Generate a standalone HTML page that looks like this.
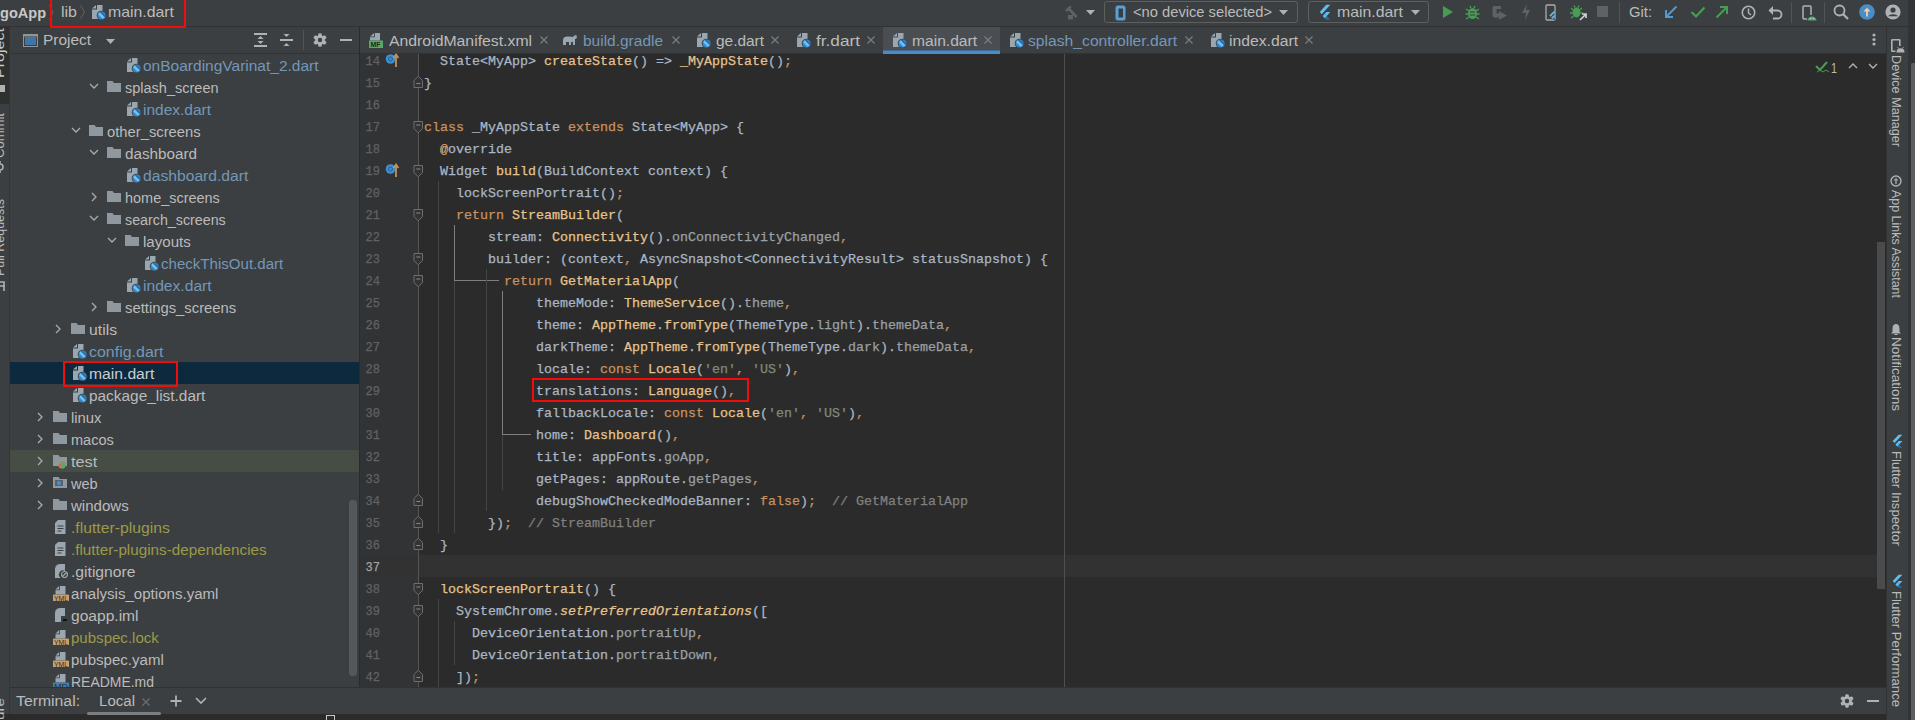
<!DOCTYPE html>
<html><head><meta charset="utf-8"><style>
html,body{margin:0;padding:0;width:1915px;height:720px;overflow:hidden;background:#3c3f41;}
body>div,body>svg{position:absolute;}
.t{font-family:"Liberation Sans",sans-serif;white-space:pre;transform-origin:0 50%;}
.m{font-family:"Liberation Mono",monospace;font-size:13.333px;line-height:22px;white-space:pre;-webkit-text-stroke:0.25px currentColor;}
</style></head><body>
<div style="left:0px;top:0px;width:1915px;height:26px;background:#3c3f41;"></div>
<div style="left:0px;top:26px;width:1915px;height:1px;background:#2f3133;"></div>
<div style="left:0px;top:27px;width:10px;height:693px;background:#3c3f41;"></div>
<div style="left:0px;top:27px;width:9px;height:77px;background:#2f3030;"></div>
<div style="left:9px;top:27px;width:1px;height:693px;background:#333536;"></div>
<div style="left:11px;top:27px;width:348px;height:661px;background:#3c3f41;"></div>
<div style="left:11px;top:53px;width:348px;height:1px;background:#323232;"></div>
<div style="left:359px;top:27px;width:1px;height:661px;background:#2b2b2b;"></div>
<div style="left:360px;top:27px;width:1526px;height:26px;background:#3c3f41;"></div>
<div style="left:360px;top:53px;width:1526px;height:1px;background:#323232;"></div>
<div style="left:360px;top:54px;width:58px;height:634px;background:#313335;"></div>
<div style="left:418px;top:54px;width:1468px;height:634px;background:#2b2b2b;"></div>
<div style="left:1886px;top:27px;width:29px;height:693px;background:#3c3f41;"></div>
<div style="left:1886px;top:27px;width:1px;height:693px;background:#323232;"></div>
<div class="t" style="left:0px;top:3.37px;font-size:14px;line-height:20px;color:#c8c8c8;transform:scaleX(1.0384);font-weight:700;">goApp</div>
<svg style="left:49px;top:5px;" width="5" height="15" viewBox="0 0 5 15"><path d="M0.5 0.5L4 7.5L0.5 14.5" fill="none" stroke="#5f6365" stroke-width="1"/></svg>
<div class="t" style="left:61px;top:2.04px;font-size:15px;line-height:20px;color:#bbbbbb;transform:scaleX(1.0667);">lib</div>
<svg style="left:80px;top:5px;" width="6" height="14" viewBox="0 0 6 14"><path d="M0.5 0.5L4.5 7L0.5 13.5" fill="none" stroke="#5f6365" stroke-width="1"/></svg>
<svg style="left:92px;top:5px;" width="15" height="15" viewBox="0 0 15 15"><path d="M5 0H10.5V14H0V4.5H5z" fill="#9aa7b0"/><path d="M0 3.5L4 0V3.5z" fill="#9aa7b0"/><circle cx="9.5" cy="10.5" r="4.8" fill="#3c3f41"/><circle cx="9.5" cy="10.5" r="4" fill="#3a86c8"/><path d="M6.2 9.3L7.8 7.3L12.6 12.3L10.6 13.8z" fill="#6ec4f5"/><path d="M7.8 7.3H10.2L13.3 10.4V12.3z" fill="#2a6aa8"/></svg>
<div class="t" style="left:108px;top:2.04px;font-size:15px;line-height:20px;color:#bbbbbb;transform:scaleX(1.0552);">main.dart</div>
<div style="left:50px;top:-2px;width:136px;height:30px;border:2px solid #f20d0d;box-sizing:border-box;"></div>
<svg style="left:1064px;top:5px;" width="14" height="15" viewBox="0 0 14 15"><path d="M1 5L5.5 1L8 1.5L6.5 3.5L13.5 11L11.5 13L4.5 5.5L3 7z" fill="#5f6264"/><rect x="4" y="10" width="5" height="4.5" fill="#5f6264"/></svg>
<svg style="left:1086px;top:10px;" width="9" height="5" viewBox="0 0 9 5"><path d="M0 0H9L4.5 5z" fill="#afb1b3"/></svg>
<div style="left:1104px;top:1px;width:194px;height:22px;border:1px solid #5e6060;box-sizing:border-box;border-radius:3px;"></div>
<svg style="left:1115px;top:5px;" width="11" height="16" viewBox="0 0 11 16"><rect x="0.5" y="0.5" width="10" height="15" rx="2.5" fill="#5a9fd6"/><rect x="3.5" y="3.5" width="4.5" height="9" fill="#3a3c3e"/></svg>
<div class="t" style="left:1133px;top:2.04px;font-size:15px;line-height:20px;color:#bbbbbb;transform:scaleX(0.9803);">&lt;no device selected&gt;</div>
<svg style="left:1279px;top:10px;" width="9" height="5" viewBox="0 0 9 5"><path d="M0 0H9L4.5 5z" fill="#afb1b3"/></svg>
<div style="left:1308px;top:1px;width:121px;height:22px;border:1px solid #5e6060;box-sizing:border-box;border-radius:3px;"></div>
<svg style="left:1319px;top:4px;" width="12" height="16" viewBox="0 0 12 16"><svg width="12" height="16" viewBox="0 0 166 202" preserveAspectRatio="none"><path d="M37.7 128.9L9.8 101L100.7 10.1H156.5z" fill="#62bdf0"/><path d="M156.4 102.4H100.7L79.8 123.3L107.7 151.2z" fill="#62bdf0"/><path d="M79.8 179.1L100.7 200H156.4L107.7 151.2z" fill="#2a6aa3"/><path d="M79.8 123.3L107.7 151.2L79.8 179.1L51.9 151.2z" fill="#62bdf0"/></svg></svg>
<div class="t" style="left:1337px;top:2.04px;font-size:15px;line-height:20px;color:#bbbbbb;transform:scaleX(1.0552);">main.dart</div>
<svg style="left:1411px;top:10px;" width="9" height="5" viewBox="0 0 9 5"><path d="M0 0H9L4.5 5z" fill="#afb1b3"/></svg>
<svg style="left:1442px;top:5px;" width="12" height="14" viewBox="0 0 12 14"><path d="M1 1L11 7L1 13z" fill="#499c54"/></svg>
<svg style="left:1465px;top:4px;" width="15" height="16" viewBox="0 0 15 16"><ellipse cx="7.5" cy="9.5" rx="4.5" ry="5.5" fill="#499c54"/><path d="M1 5L4 7M14 5L11 7M0.5 10H3M14.5 10H12M1 15L4 13M14 15L11 13M5 2L6 4M10 2L9 4" stroke="#499c54" stroke-width="1.4"/><path d="M5 8H10M5 11H10" stroke="#3c3f41" stroke-width="1"/></svg>
<svg style="left:1491px;top:5px;" width="17" height="15" viewBox="0 0 17 15"><path d="M1.5 2.5Q1.5 1 3 1H10V4H5.5V8.5H9.5V9.5L7 12.5H3.5Q1.5 12.5 1.5 10.5z" fill="#5f6264"/><path d="M8 6L16 10.5L8 15z" fill="#5f6264"/></svg>
<svg style="left:1522px;top:4px;" width="8" height="16" viewBox="0 0 8 16"><path d="M5 0L0 9H4L3 16L8 6H4z" fill="#5f6264"/></svg>
<svg style="left:1545px;top:4px;" width="14" height="17" viewBox="0 0 14 17"><rect x="1" y="1" width="9" height="15" rx="1" fill="none" stroke="#a9abad" stroke-width="1.3"/></svg>
<svg style="left:1549px;top:11px;" width="7" height="9" viewBox="0 0 7 9"><svg width="7" height="9" viewBox="0 0 166 202" preserveAspectRatio="none"><path d="M37.7 128.9L9.8 101L100.7 10.1H156.5z" fill="#62bdf0"/><path d="M156.4 102.4H100.7L79.8 123.3L107.7 151.2z" fill="#62bdf0"/><path d="M79.8 179.1L100.7 200H156.4L107.7 151.2z" fill="#2a6aa3"/><path d="M79.8 123.3L107.7 151.2L79.8 179.1L51.9 151.2z" fill="#62bdf0"/></svg></svg>
<svg style="left:1570px;top:4px;" width="18" height="17" viewBox="0 0 18 17"><ellipse cx="6.5" cy="8.5" rx="4" ry="5" fill="#499c54"/><path d="M1 4L3.5 6M12 4L9.5 6M0 9H2.5M13 9H10.5M1 14L3.5 12M4 1.5L5 3.5M9 1.5L8 3.5" stroke="#499c54" stroke-width="1.4"/><path d="M10 16L16 10M12 10H16V14" fill="none" stroke="#d0d0d0" stroke-width="1.7"/></svg>
<div style="left:1597px;top:6px;width:11px;height:11px;background:#5f6264;"></div>
<div style="left:1619px;top:2px;width:1px;height:21px;background:#515456;"></div>
<div class="t" style="left:1629px;top:2.04px;font-size:15px;line-height:20px;color:#bbbbbb;transform:scaleX(0.9853);">Git:</div>
<svg style="left:1664px;top:5px;" width="14" height="14" viewBox="0 0 14 14"><path d="M12.5 1.5L2.5 11.5M2 5V12H9" fill="none" stroke="#4d9bd6" stroke-width="2"/></svg>
<svg style="left:1690px;top:5px;" width="16" height="14" viewBox="0 0 16 14"><path d="M1.5 7L6 11.5L14.5 2.5" fill="none" stroke="#499c54" stroke-width="2.2"/></svg>
<svg style="left:1715px;top:5px;" width="14" height="14" viewBox="0 0 14 14"><path d="M1.5 12.5L11.5 2.5M5 2H12V9" fill="none" stroke="#499c54" stroke-width="2"/></svg>
<svg style="left:1741px;top:5px;" width="15" height="15" viewBox="0 0 15 15"><circle cx="7.5" cy="7.5" r="6.2" fill="none" stroke="#afb1b3" stroke-width="1.6"/><path d="M7.5 3.5V8L10 10" fill="none" stroke="#afb1b3" stroke-width="1.5"/></svg>
<svg style="left:1768px;top:4px;" width="15" height="16" viewBox="0 0 15 16"><path d="M4 6.5H9.5A4 4 0 0 1 9.5 14.5H5" fill="none" stroke="#afb1b3" stroke-width="1.8"/><path d="M0.5 6.5L5 2V11z" fill="#afb1b3"/></svg>
<div style="left:1791px;top:2px;width:1px;height:21px;background:#515456;"></div>
<svg style="left:1802px;top:5px;" width="15" height="16" viewBox="0 0 15 16"><rect x="1" y="1" width="8" height="13" rx="1" fill="none" stroke="#afb1b3" stroke-width="1.5"/><rect x="5" y="10" width="10" height="6" fill="#3c3f41"/><path d="M5.5 15.5A4.5 4 0 0 1 14.5 15.5z" fill="#59a869"/><circle cx="8.5" cy="13.5" r="0.8" fill="#9fd4f0"/><circle cx="11.5" cy="13.5" r="0.8" fill="#9fd4f0"/></svg>
<div style="left:1824px;top:2px;width:1px;height:21px;background:#515456;"></div>
<svg style="left:1833px;top:4px;" width="16" height="16" viewBox="0 0 16 16"><circle cx="6.5" cy="6.5" r="5" fill="none" stroke="#afb1b3" stroke-width="1.8"/><path d="M10 10L15 15" stroke="#afb1b3" stroke-width="2.2"/></svg>
<svg style="left:1859px;top:4px;" width="16" height="16" viewBox="0 0 16 16"><circle cx="8" cy="8" r="7.8" fill="#4a8cc6"/><path d="M8 12.5V6" stroke="#e8d3a8" stroke-width="1.8"/><path d="M4.5 7.5L8 3.8L11.5 7.5z" fill="#e8d3a8"/></svg>
<svg style="left:1885px;top:4px;" width="16" height="16" viewBox="0 0 16 16"><circle cx="8" cy="8" r="7.6" fill="#afb1b3"/><circle cx="8" cy="6" r="2.6" fill="#3c3f41"/><path d="M2.8 12.3A6.5 5 0 0 1 13.2 12.3z" fill="#3c3f41"/></svg>
<div style="left:1908px;top:0px;width:7px;height:26px;background:#323435;"></div>
<svg style="left:23px;top:34px;" width="15" height="13" viewBox="0 0 15 13"><rect x="0.5" y="0.5" width="14" height="12" fill="none" stroke="#8f9599" stroke-width="1"/><rect x="0.5" y="0.5" width="14" height="2" fill="#8f9599"/><rect x="2" y="3" width="11" height="8" fill="#3e76a6"/></svg>
<div class="t" style="left:43px;top:30.37px;font-size:14px;line-height:20px;color:#bbbbbb;transform:scaleX(1.1019);">Project</div>
<svg style="left:106px;top:39px;" width="9" height="5" viewBox="0 0 9 5"><path d="M0 0H9L4.5 5z" fill="#afb1b3"/></svg>
<svg style="left:254px;top:32px;" width="14" height="16" viewBox="0 0 14 16"><rect x="0" y="1" width="13" height="2" fill="#afb1b3"/><rect x="0" y="13" width="13" height="2" fill="#afb1b3"/><path d="M3.5 7L6.5 4L9.5 7z" fill="#afb1b3"/><path d="M3.5 9L6.5 12L9.5 9z" fill="#afb1b3"/></svg>
<svg style="left:280px;top:33px;" width="14" height="14" viewBox="0 0 14 14"><rect x="0" y="6" width="13" height="2" fill="#afb1b3"/><path d="M3.5 1H9.5L6.5 4z" fill="#afb1b3"/><path d="M3.5 13H9.5L6.5 10z" fill="#afb1b3"/></svg>
<div style="left:303px;top:30px;width:1px;height:20px;background:#515456;"></div>
<svg style="left:313px;top:33px;" width="14" height="14" viewBox="0 0 14 14"><circle cx="7.0" cy="7.0" r="4.20" fill="#afb1b3"/><path d="M5.50 4.23L6.32 1.14L7.68 1.14L8.50 4.23L8.65 4.31L11.74 3.48L12.41 4.66L10.15 6.92L10.15 7.08L12.41 9.34L11.74 10.52L8.65 9.69L8.50 9.77L7.68 12.86L6.32 12.86L5.50 9.77L5.35 9.69L2.26 10.52L1.59 9.34L3.85 7.08L3.85 6.92L1.59 4.66L2.26 3.48L5.35 4.31z" fill="#afb1b3" stroke="#afb1b3" stroke-width="2" stroke-linejoin="round"/><circle cx="7.0" cy="7.0" r="2.2" fill="#3c3f41"/></svg>
<div style="left:340px;top:39px;width:12px;height:2px;background:#afb1b3;"></div>
<div style="left:10px;top:362px;width:349px;height:22px;background:#0d293e;"></div>
<div style="left:10px;top:450px;width:349px;height:22px;background:#454d45;"></div>
<svg style="left:127px;top:58px;" width="15" height="15" viewBox="0 0 15 15"><path d="M5 0H10.5V14H0V4.5H5z" fill="#9aa7b0"/><path d="M0 3.5L4 0V3.5z" fill="#9aa7b0"/><circle cx="9.5" cy="10.5" r="4.8" fill="#3c3f41"/><circle cx="9.5" cy="10.5" r="4" fill="#3a86c8"/><path d="M6.2 9.3L7.8 7.3L12.6 12.3L10.6 13.8z" fill="#6ec4f5"/><path d="M7.8 7.3H10.2L13.3 10.4V12.3z" fill="#2a6aa8"/></svg>
<div class="t" style="left:143px;top:56.37px;font-size:14px;line-height:20px;color:#7497b8;transform:scaleX(1.1076);">onBoardingVarinat_2.dart</div>
<svg style="left:107px;top:81px;" width="14" height="12" viewBox="0 0 14 12"><path d="M0 0H5.5L7 2H14V11H0z" fill="#8e989e"/></svg>
<svg style="left:89px;top:83px;" width="10" height="6" viewBox="0 0 10 6"><path d="M1 1L5 5L9 1" fill="none" stroke="#a3adb3" stroke-width="1.3"/></svg>
<div class="t" style="left:125px;top:78.37px;font-size:14px;line-height:20px;color:#bbbbbb;transform:scaleX(1.0362);">splash_screen</div>
<svg style="left:127px;top:102px;" width="15" height="15" viewBox="0 0 15 15"><path d="M5 0H10.5V14H0V4.5H5z" fill="#9aa7b0"/><path d="M0 3.5L4 0V3.5z" fill="#9aa7b0"/><circle cx="9.5" cy="10.5" r="4.8" fill="#3c3f41"/><circle cx="9.5" cy="10.5" r="4" fill="#3a86c8"/><path d="M6.2 9.3L7.8 7.3L12.6 12.3L10.6 13.8z" fill="#6ec4f5"/><path d="M7.8 7.3H10.2L13.3 10.4V12.3z" fill="#2a6aa8"/></svg>
<div class="t" style="left:143px;top:100.37px;font-size:14px;line-height:20px;color:#7497b8;transform:scaleX(1.1065);">index.dart</div>
<svg style="left:89px;top:125px;" width="14" height="12" viewBox="0 0 14 12"><path d="M0 0H5.5L7 2H14V11H0z" fill="#8e989e"/></svg>
<svg style="left:71px;top:127px;" width="10" height="6" viewBox="0 0 10 6"><path d="M1 1L5 5L9 1" fill="none" stroke="#a3adb3" stroke-width="1.3"/></svg>
<div class="t" style="left:107px;top:122.37px;font-size:14px;line-height:20px;color:#bbbbbb;transform:scaleX(1.0556);">other_screens</div>
<svg style="left:107px;top:147px;" width="14" height="12" viewBox="0 0 14 12"><path d="M0 0H5.5L7 2H14V11H0z" fill="#8e989e"/></svg>
<svg style="left:89px;top:149px;" width="10" height="6" viewBox="0 0 10 6"><path d="M1 1L5 5L9 1" fill="none" stroke="#a3adb3" stroke-width="1.3"/></svg>
<div class="t" style="left:125px;top:144.37px;font-size:14px;line-height:20px;color:#bbbbbb;transform:scaleX(1.0888);">dashboard</div>
<svg style="left:127px;top:168px;" width="15" height="15" viewBox="0 0 15 15"><path d="M5 0H10.5V14H0V4.5H5z" fill="#9aa7b0"/><path d="M0 3.5L4 0V3.5z" fill="#9aa7b0"/><circle cx="9.5" cy="10.5" r="4.8" fill="#3c3f41"/><circle cx="9.5" cy="10.5" r="4" fill="#3a86c8"/><path d="M6.2 9.3L7.8 7.3L12.6 12.3L10.6 13.8z" fill="#6ec4f5"/><path d="M7.8 7.3H10.2L13.3 10.4V12.3z" fill="#2a6aa8"/></svg>
<div class="t" style="left:143px;top:166.37px;font-size:14px;line-height:20px;color:#7497b8;transform:scaleX(1.1187);">dashboard.dart</div>
<svg style="left:107px;top:191px;" width="14" height="12" viewBox="0 0 14 12"><path d="M0 0H5.5L7 2H14V11H0z" fill="#8e989e"/></svg>
<svg style="left:91px;top:192px;" width="6" height="10" viewBox="0 0 6 10"><path d="M1 1L5 5L1 9" fill="none" stroke="#a3adb3" stroke-width="1.3"/></svg>
<div class="t" style="left:125px;top:188.37px;font-size:14px;line-height:20px;color:#bbbbbb;transform:scaleX(1.0329);">home_screens</div>
<svg style="left:107px;top:213px;" width="14" height="12" viewBox="0 0 14 12"><path d="M0 0H5.5L7 2H14V11H0z" fill="#8e989e"/></svg>
<svg style="left:89px;top:215px;" width="10" height="6" viewBox="0 0 10 6"><path d="M1 1L5 5L9 1" fill="none" stroke="#a3adb3" stroke-width="1.3"/></svg>
<div class="t" style="left:125px;top:210.37px;font-size:14px;line-height:20px;color:#bbbbbb;transform:scaleX(1.0194);">search_screens</div>
<svg style="left:125px;top:235px;" width="14" height="12" viewBox="0 0 14 12"><path d="M0 0H5.5L7 2H14V11H0z" fill="#8e989e"/></svg>
<svg style="left:107px;top:237px;" width="10" height="6" viewBox="0 0 10 6"><path d="M1 1L5 5L9 1" fill="none" stroke="#a3adb3" stroke-width="1.3"/></svg>
<div class="t" style="left:143px;top:232.37px;font-size:14px;line-height:20px;color:#bbbbbb;transform:scaleX(1.0779);">layouts</div>
<svg style="left:145px;top:256px;" width="15" height="15" viewBox="0 0 15 15"><path d="M5 0H10.5V14H0V4.5H5z" fill="#9aa7b0"/><path d="M0 3.5L4 0V3.5z" fill="#9aa7b0"/><circle cx="9.5" cy="10.5" r="4.8" fill="#3c3f41"/><circle cx="9.5" cy="10.5" r="4" fill="#3a86c8"/><path d="M6.2 9.3L7.8 7.3L12.6 12.3L10.6 13.8z" fill="#6ec4f5"/><path d="M7.8 7.3H10.2L13.3 10.4V12.3z" fill="#2a6aa8"/></svg>
<div class="t" style="left:161px;top:254.37px;font-size:14px;line-height:20px;color:#7497b8;transform:scaleX(1.0761);">checkThisOut.dart</div>
<svg style="left:127px;top:278px;" width="15" height="15" viewBox="0 0 15 15"><path d="M5 0H10.5V14H0V4.5H5z" fill="#9aa7b0"/><path d="M0 3.5L4 0V3.5z" fill="#9aa7b0"/><circle cx="9.5" cy="10.5" r="4.8" fill="#3c3f41"/><circle cx="9.5" cy="10.5" r="4" fill="#3a86c8"/><path d="M6.2 9.3L7.8 7.3L12.6 12.3L10.6 13.8z" fill="#6ec4f5"/><path d="M7.8 7.3H10.2L13.3 10.4V12.3z" fill="#2a6aa8"/></svg>
<div class="t" style="left:143px;top:276.37px;font-size:14px;line-height:20px;color:#7497b8;transform:scaleX(1.1163);">index.dart</div>
<svg style="left:107px;top:301px;" width="14" height="12" viewBox="0 0 14 12"><path d="M0 0H5.5L7 2H14V11H0z" fill="#8e989e"/></svg>
<svg style="left:91px;top:302px;" width="6" height="10" viewBox="0 0 6 10"><path d="M1 1L5 5L1 9" fill="none" stroke="#a3adb3" stroke-width="1.3"/></svg>
<div class="t" style="left:125px;top:298.37px;font-size:14px;line-height:20px;color:#bbbbbb;transform:scaleX(1.0589);">settings_screens</div>
<svg style="left:71px;top:323px;" width="14" height="12" viewBox="0 0 14 12"><path d="M0 0H5.5L7 2H14V11H0z" fill="#8e989e"/></svg>
<svg style="left:55px;top:324px;" width="6" height="10" viewBox="0 0 6 10"><path d="M1 1L5 5L1 9" fill="none" stroke="#a3adb3" stroke-width="1.3"/></svg>
<div class="t" style="left:89px;top:320.37px;font-size:14px;line-height:20px;color:#bbbbbb;transform:scaleX(1.1249);">utils</div>
<svg style="left:73px;top:344px;" width="15" height="15" viewBox="0 0 15 15"><path d="M5 0H10.5V14H0V4.5H5z" fill="#9aa7b0"/><path d="M0 3.5L4 0V3.5z" fill="#9aa7b0"/><circle cx="9.5" cy="10.5" r="4.8" fill="#3c3f41"/><circle cx="9.5" cy="10.5" r="4" fill="#3a86c8"/><path d="M6.2 9.3L7.8 7.3L12.6 12.3L10.6 13.8z" fill="#6ec4f5"/><path d="M7.8 7.3H10.2L13.3 10.4V12.3z" fill="#2a6aa8"/></svg>
<div class="t" style="left:89px;top:342.37px;font-size:14px;line-height:20px;color:#7497b8;transform:scaleX(1.1401);">config.dart</div>
<svg style="left:73px;top:366px;" width="15" height="15" viewBox="0 0 15 15"><path d="M5 0H10.5V14H0V4.5H5z" fill="#9aa7b0"/><path d="M0 3.5L4 0V3.5z" fill="#9aa7b0"/><circle cx="9.5" cy="10.5" r="4.8" fill="#3c3f41"/><circle cx="9.5" cy="10.5" r="4" fill="#3a86c8"/><path d="M6.2 9.3L7.8 7.3L12.6 12.3L10.6 13.8z" fill="#6ec4f5"/><path d="M7.8 7.3H10.2L13.3 10.4V12.3z" fill="#2a6aa8"/></svg>
<div class="t" style="left:89px;top:364.37px;font-size:14px;line-height:20px;color:#c9cdd1;transform:scaleX(1.1212);">main.dart</div>
<svg style="left:73px;top:388px;" width="15" height="15" viewBox="0 0 15 15"><path d="M5 0H10.5V14H0V4.5H5z" fill="#9aa7b0"/><path d="M0 3.5L4 0V3.5z" fill="#9aa7b0"/><circle cx="9.5" cy="10.5" r="4.8" fill="#3c3f41"/><circle cx="9.5" cy="10.5" r="4" fill="#3a86c8"/><path d="M6.2 9.3L7.8 7.3L12.6 12.3L10.6 13.8z" fill="#6ec4f5"/><path d="M7.8 7.3H10.2L13.3 10.4V12.3z" fill="#2a6aa8"/></svg>
<div class="t" style="left:89px;top:386.37px;font-size:14px;line-height:20px;color:#bbbbbb;transform:scaleX(1.0993);">package_list.dart</div>
<svg style="left:53px;top:411px;" width="14" height="12" viewBox="0 0 14 12"><path d="M0 0H5.5L7 2H14V11H0z" fill="#8e989e"/></svg>
<svg style="left:37px;top:412px;" width="6" height="10" viewBox="0 0 6 10"><path d="M1 1L5 5L1 9" fill="none" stroke="#a3adb3" stroke-width="1.3"/></svg>
<div class="t" style="left:71px;top:408.37px;font-size:14px;line-height:20px;color:#bbbbbb;transform:scaleX(1.0597);">linux</div>
<svg style="left:53px;top:433px;" width="14" height="12" viewBox="0 0 14 12"><path d="M0 0H5.5L7 2H14V11H0z" fill="#8e989e"/></svg>
<svg style="left:37px;top:434px;" width="6" height="10" viewBox="0 0 6 10"><path d="M1 1L5 5L1 9" fill="none" stroke="#a3adb3" stroke-width="1.3"/></svg>
<div class="t" style="left:71px;top:430.37px;font-size:14px;line-height:20px;color:#bbbbbb;transform:scaleX(1.0384);">macos</div>
<svg style="left:53px;top:455px;" width="14" height="12" viewBox="0 0 14 12"><path d="M0 0H5.5L7 2H14V11H0z" fill="#8e989e"/></svg>
<svg style="left:37px;top:456px;" width="6" height="10" viewBox="0 0 6 10"><path d="M1 1L5 5L1 9" fill="none" stroke="#a3adb3" stroke-width="1.3"/></svg>
<svg style="left:58px;top:461px;" width="8" height="8" viewBox="0 0 8 8"><circle cx="4" cy="4" r="3.6" fill="#b0875a"/><path d="M4 0.5A3.5 3.5 0 0 1 4 7.5z" fill="#59a869"/><circle cx="2.3" cy="4" r="1" fill="#e05555"/></svg>
<div class="t" style="left:71px;top:452.37px;font-size:14px;line-height:20px;color:#bbbbbb;transform:scaleX(1.1612);">test</div>
<svg style="left:53px;top:477px;" width="14" height="12" viewBox="0 0 14 12"><path d="M0 0H5.5L7 2H14V11H0z" fill="#8e989e"/></svg>
<svg style="left:37px;top:478px;" width="6" height="10" viewBox="0 0 6 10"><path d="M1 1L5 5L1 9" fill="none" stroke="#a3adb3" stroke-width="1.3"/></svg>
<svg style="left:55px;top:480px;" width="8" height="6" viewBox="0 0 8 6"><rect x="0" y="0" width="8" height="6" fill="#596166"/><circle cx="4" cy="3" r="2.2" fill="#3d8fd1"/></svg>
<div class="t" style="left:71px;top:474.37px;font-size:14px;line-height:20px;color:#bbbbbb;transform:scaleX(1.0400);">web</div>
<svg style="left:53px;top:499px;" width="14" height="12" viewBox="0 0 14 12"><path d="M0 0H5.5L7 2H14V11H0z" fill="#8e989e"/></svg>
<svg style="left:37px;top:500px;" width="6" height="10" viewBox="0 0 6 10"><path d="M1 1L5 5L1 9" fill="none" stroke="#a3adb3" stroke-width="1.3"/></svg>
<div class="t" style="left:71px;top:496.37px;font-size:14px;line-height:20px;color:#bbbbbb;transform:scaleX(1.0751);">windows</div>
<svg style="left:55px;top:520px;" width="11" height="14" viewBox="0 0 11 14"><path d="M3 0H10.5V14H0V3z" fill="#9aa7b0"/><path d="M2.5 6H8.5M2.5 8.5H8.5M2.5 11H6.5" stroke="#3c3f41" stroke-width="1"/></svg>
<div class="t" style="left:71px;top:518.37px;font-size:14px;line-height:20px;color:#9a9a48;transform:scaleX(1.1241);">.flutter-plugins</div>
<svg style="left:55px;top:542px;" width="11" height="14" viewBox="0 0 11 14"><path d="M3 0H10.5V14H0V3z" fill="#9aa7b0"/><path d="M2.5 6H8.5M2.5 8.5H8.5M2.5 11H6.5" stroke="#3c3f41" stroke-width="1"/></svg>
<div class="t" style="left:71px;top:540.37px;font-size:14px;line-height:20px;color:#9a9a48;transform:scaleX(1.0880);">.flutter-plugins-dependencies</div>
<svg style="left:55px;top:564px;" width="13" height="14" viewBox="0 0 13 14"><path d="M4 0H10V7A4 4 0 0 0 6 14H0V4z" fill="#9aa7b0"/><path d="M0 3L3 0V3z" fill="#9aa7b0"/><circle cx="9.5" cy="10.5" r="3" fill="none" stroke="#9aa7b0" stroke-width="1.2"/><path d="M7.5 12.5L11.5 8.5" stroke="#9aa7b0" stroke-width="1.2"/></svg>
<div class="t" style="left:71px;top:562.37px;font-size:14px;line-height:20px;color:#bbbbbb;transform:scaleX(1.1188);">.gitignore</div>
<svg style="left:53px;top:586px;" width="16" height="15" viewBox="0 0 16 15"><path d="M7 0H12.5V8.6H2.5V4.2H7z" fill="#9aa7b0"/><path d="M2.5 3.4L6.2 0V3.4z" fill="#9aa7b0"/><rect x="0" y="8.6" width="16" height="6.4" fill="#c8a070"/><text x="8" y="14.6" font-size="7" font-family="Liberation Sans" text-anchor="middle" fill="#2b2b2b" textLength="14" lengthAdjust="spacingAndGlyphs">YML</text></svg>
<div class="t" style="left:71px;top:584.37px;font-size:14px;line-height:20px;color:#bbbbbb;transform:scaleX(1.0766);">analysis_options.yaml</div>
<svg style="left:55px;top:608px;" width="13" height="14" viewBox="0 0 13 14"><path d="M4 0H10V8H6V14H0V4z" fill="#9aa7b0"/><path d="M0 3L3 0V3z" fill="#9aa7b0"/><rect x="8" y="11" width="4" height="2" fill="#111"/></svg>
<div class="t" style="left:71px;top:606.37px;font-size:14px;line-height:20px;color:#bbbbbb;transform:scaleX(1.1125);">goapp.iml</div>
<svg style="left:53px;top:630px;" width="16" height="15" viewBox="0 0 16 15"><path d="M7 0H12.5V8.6H2.5V4.2H7z" fill="#9aa7b0"/><path d="M2.5 3.4L6.2 0V3.4z" fill="#9aa7b0"/><rect x="0" y="8.6" width="16" height="6.4" fill="#c8a070"/><text x="8" y="14.6" font-size="7" font-family="Liberation Sans" text-anchor="middle" fill="#2b2b2b" textLength="14" lengthAdjust="spacingAndGlyphs">YML</text></svg>
<div class="t" style="left:71px;top:628.37px;font-size:14px;line-height:20px;color:#9a9a48;transform:scaleX(1.0748);">pubspec.lock</div>
<svg style="left:53px;top:652px;" width="16" height="15" viewBox="0 0 16 15"><path d="M7 0H12.5V8.6H2.5V4.2H7z" fill="#9aa7b0"/><path d="M2.5 3.4L6.2 0V3.4z" fill="#9aa7b0"/><rect x="0" y="8.6" width="16" height="6.4" fill="#c8a070"/><text x="8" y="14.6" font-size="7" font-family="Liberation Sans" text-anchor="middle" fill="#2b2b2b" textLength="14" lengthAdjust="spacingAndGlyphs">YML</text></svg>
<div class="t" style="left:71px;top:650.37px;font-size:14px;line-height:20px;color:#bbbbbb;transform:scaleX(1.0736);">pubspec.yaml</div>
<svg style="left:53px;top:674px;" width="16" height="15" viewBox="0 0 16 15"><path d="M7 0H12.5V8.6H2.5V4.2H7z" fill="#9aa7b0"/><path d="M2.5 3.4L6.2 0V3.4z" fill="#9aa7b0"/><rect x="0" y="8.6" width="16" height="6.4" fill="#3e7fc0"/><text x="8" y="14.6" font-size="7" font-family="Liberation Sans" text-anchor="middle" fill="#2b2b2b" textLength="14" lengthAdjust="spacingAndGlyphs">MD</text></svg>
<div class="t" style="left:71px;top:672.37px;font-size:14px;line-height:20px;color:#bbbbbb;transform:scaleX(0.9972);">README.md</div>
<div style="left:63px;top:361px;width:115px;height:26px;border:2px solid #f20d0d;box-sizing:border-box;"></div>
<div style="left:349px;top:500px;width:8px;height:176px;background:#55585a;border-radius:4px;"></div>
<div style="left:883px;top:27px;width:117px;height:26px;background:#4a4e52;"></div>
<div style="left:883px;top:50px;width:117px;height:1px;background:#3f6c96;"></div>
<div style="left:883px;top:51px;width:117px;height:3px;background:#4a8cc6;"></div>
<svg style="left:369px;top:33px;" width="15" height="16" viewBox="0 0 15 16"><path d="M6 0H11V7.5H1V4.2H6z" fill="#9aa7b0"/><path d="M1 3.4L5.2 0V3.4z" fill="#9aa7b0"/><rect x="0" y="7.5" width="14" height="7.5" fill="#59a869"/><text x="6.5" y="14" font-size="7.5" font-family="Liberation Sans" font-weight="700" text-anchor="middle" fill="#1f2b20" textLength="10" lengthAdjust="spacingAndGlyphs">MF</text></svg>
<div class="t" style="left:389px;top:31.37px;font-size:14px;line-height:20px;color:#bbbbbb;transform:scaleX(1.1279);">AndroidManifest.xml</div>
<svg style="left:540px;top:36px;" width="8" height="8" viewBox="0 0 8 8"><path d="M0.5 0.5L7.5 7.5M7.5 0.5L0.5 7.5" stroke="#7d7f81" stroke-width="1.1"/></svg>
<svg style="left:562px;top:34px;" width="16" height="12" viewBox="0 0 16 12"><path d="M1 11V6C1 3 4 2 7 2.5L11 3C12 1 14 0.5 15 2L14.5 4.5L13 5V11H11V8H9V11H7V8H4V11z" fill="#9aa7b0"/></svg>
<div class="t" style="left:583px;top:31.37px;font-size:14px;line-height:20px;color:#7497b8;transform:scaleX(1.1058);">build.gradle</div>
<svg style="left:672px;top:36px;" width="8" height="8" viewBox="0 0 8 8"><path d="M0.5 0.5L7.5 7.5M7.5 0.5L0.5 7.5" stroke="#7d7f81" stroke-width="1.1"/></svg>
<svg style="left:697px;top:33px;" width="15" height="15" viewBox="0 0 15 15"><path d="M5 0H10.5V14H0V4.5H5z" fill="#9aa7b0"/><path d="M0 3.5L4 0V3.5z" fill="#9aa7b0"/><circle cx="9.5" cy="10.5" r="4.8" fill="#3c3f41"/><circle cx="9.5" cy="10.5" r="4" fill="#3a86c8"/><path d="M6.2 9.3L7.8 7.3L12.6 12.3L10.6 13.8z" fill="#6ec4f5"/><path d="M7.8 7.3H10.2L13.3 10.4V12.3z" fill="#2a6aa8"/></svg>
<div class="t" style="left:716px;top:31.37px;font-size:14px;line-height:20px;color:#bbbbbb;transform:scaleX(1.1019);">ge.dart</div>
<svg style="left:771px;top:36px;" width="8" height="8" viewBox="0 0 8 8"><path d="M0.5 0.5L7.5 7.5M7.5 0.5L0.5 7.5" stroke="#7d7f81" stroke-width="1.1"/></svg>
<svg style="left:797px;top:33px;" width="15" height="15" viewBox="0 0 15 15"><path d="M5 0H10.5V14H0V4.5H5z" fill="#9aa7b0"/><path d="M0 3.5L4 0V3.5z" fill="#9aa7b0"/><circle cx="9.5" cy="10.5" r="4.8" fill="#3c3f41"/><circle cx="9.5" cy="10.5" r="4" fill="#3a86c8"/><path d="M6.2 9.3L7.8 7.3L12.6 12.3L10.6 13.8z" fill="#6ec4f5"/><path d="M7.8 7.3H10.2L13.3 10.4V12.3z" fill="#2a6aa8"/></svg>
<div class="t" style="left:816px;top:31.37px;font-size:14px;line-height:20px;color:#bbbbbb;transform:scaleX(1.2297);">fr.dart</div>
<svg style="left:867px;top:36px;" width="8" height="8" viewBox="0 0 8 8"><path d="M0.5 0.5L7.5 7.5M7.5 0.5L0.5 7.5" stroke="#7d7f81" stroke-width="1.1"/></svg>
<svg style="left:893px;top:33px;" width="15" height="15" viewBox="0 0 15 15"><path d="M5 0H10.5V14H0V4.5H5z" fill="#9aa7b0"/><path d="M0 3.5L4 0V3.5z" fill="#9aa7b0"/><circle cx="9.5" cy="10.5" r="4.8" fill="#3c3f41"/><circle cx="9.5" cy="10.5" r="4" fill="#3a86c8"/><path d="M6.2 9.3L7.8 7.3L12.6 12.3L10.6 13.8z" fill="#6ec4f5"/><path d="M7.8 7.3H10.2L13.3 10.4V12.3z" fill="#2a6aa8"/></svg>
<div class="t" style="left:912px;top:31.37px;font-size:14px;line-height:20px;color:#bbbbbb;transform:scaleX(1.1144);">main.dart</div>
<svg style="left:984px;top:36px;" width="8" height="8" viewBox="0 0 8 8"><path d="M0.5 0.5L7.5 7.5M7.5 0.5L0.5 7.5" stroke="#7d7f81" stroke-width="1.1"/></svg>
<svg style="left:1010px;top:33px;" width="15" height="15" viewBox="0 0 15 15"><path d="M5 0H10.5V14H0V4.5H5z" fill="#9aa7b0"/><path d="M0 3.5L4 0V3.5z" fill="#9aa7b0"/><circle cx="9.5" cy="10.5" r="4.8" fill="#3c3f41"/><circle cx="9.5" cy="10.5" r="4" fill="#3a86c8"/><path d="M6.2 9.3L7.8 7.3L12.6 12.3L10.6 13.8z" fill="#6ec4f5"/><path d="M7.8 7.3H10.2L13.3 10.4V12.3z" fill="#2a6aa8"/></svg>
<div class="t" style="left:1028px;top:31.37px;font-size:14px;line-height:20px;color:#7497b8;transform:scaleX(1.1202);">splash_controller.dart</div>
<svg style="left:1185px;top:36px;" width="8" height="8" viewBox="0 0 8 8"><path d="M0.5 0.5L7.5 7.5M7.5 0.5L0.5 7.5" stroke="#7d7f81" stroke-width="1.1"/></svg>
<svg style="left:1211px;top:33px;" width="15" height="15" viewBox="0 0 15 15"><path d="M5 0H10.5V14H0V4.5H5z" fill="#9aa7b0"/><path d="M0 3.5L4 0V3.5z" fill="#9aa7b0"/><circle cx="9.5" cy="10.5" r="4.8" fill="#3c3f41"/><circle cx="9.5" cy="10.5" r="4" fill="#3a86c8"/><path d="M6.2 9.3L7.8 7.3L12.6 12.3L10.6 13.8z" fill="#6ec4f5"/><path d="M7.8 7.3H10.2L13.3 10.4V12.3z" fill="#2a6aa8"/></svg>
<div class="t" style="left:1229px;top:31.37px;font-size:14px;line-height:20px;color:#bbbbbb;transform:scaleX(1.1228);">index.dart</div>
<svg style="left:1305px;top:36px;" width="8" height="8" viewBox="0 0 8 8"><path d="M0.5 0.5L7.5 7.5M7.5 0.5L0.5 7.5" stroke="#7d7f81" stroke-width="1.1"/></svg>
<svg style="left:1872px;top:33px;" width="4" height="13" viewBox="0 0 4 13"><circle cx="2" cy="2" r="1.6" fill="#afb1b3"/><circle cx="2" cy="6.5" r="1.6" fill="#afb1b3"/><circle cx="2" cy="11" r="1.6" fill="#afb1b3"/></svg>
<div style="left:418px;top:555px;width:1460px;height:22px;background:#323232;"></div>
<div style="left:360px;top:555px;width:58px;height:22px;background:#323232;"></div>
<div style="left:1064px;top:54px;width:1px;height:634px;background:#4d504e;"></div>
<div style="left:418px;top:54px;width:1px;height:634px;background:#555555;"></div>
<div style="left:438px;top:181px;width:1px;height:352px;background:#434643;"></div>
<div style="left:454px;top:225px;width:1px;height:56px;background:#7d817d;"></div>
<div style="left:454px;top:281px;width:1px;height:252px;background:#434643;"></div>
<div style="left:454px;top:280px;width:45px;height:1px;background:#7d817d;"></div>
<div style="left:486px;top:269px;width:1px;height:242px;background:#434643;"></div>
<div style="left:502px;top:291px;width:1px;height:144px;background:#7d817d;"></div>
<div style="left:502px;top:435px;width:1px;height:55px;background:#434643;"></div>
<div style="left:502px;top:434px;width:29px;height:1px;background:#7d817d;"></div>
<div style="left:438px;top:599px;width:1px;height:88px;background:#434643;"></div>
<div style="left:454px;top:621px;width:1px;height:44px;background:#434643;"></div>
<div class="m" style="left:365.6px;top:51px;font-size:12px;color:#606366;">14</div>
<div class="m" style="left:440.0px;top:51px;"><span style="color:#a9b7c6">State&lt;MyApp&gt; </span><span style="color:#e6c38e">createState</span><span style="color:#a9b7c6">() =&gt; </span><span style="color:#e6c38e">_MyAppState</span><span style="color:#a9b7c6">()</span><span style="color:#c8915e">;</span></div>
<div class="m" style="left:365.6px;top:73px;font-size:12px;color:#606366;">15</div>
<div class="m" style="left:424.0px;top:73px;"><span style="color:#a9b7c6">}</span></div>
<div class="m" style="left:365.6px;top:95px;font-size:12px;color:#606366;">16</div>
<div class="m" style="left:365.6px;top:117px;font-size:12px;color:#606366;">17</div>
<div class="m" style="left:424.0px;top:117px;"><span style="color:#c8915e">class </span><span style="color:#a9b7c6">_MyAppState </span><span style="color:#c8915e">extends </span><span style="color:#a9b7c6">State&lt;MyApp&gt; {</span></div>
<div class="m" style="left:365.6px;top:139px;font-size:12px;color:#606366;">18</div>
<div class="m" style="left:440.0px;top:139px;"><span style="color:#d3a56e">@</span><span style="color:#a9b7c6">override</span></div>
<div class="m" style="left:365.6px;top:161px;font-size:12px;color:#606366;">19</div>
<div class="m" style="left:440.0px;top:161px;"><span style="color:#a9b7c6">Widget </span><span style="color:#e6c38e">build</span><span style="color:#a9b7c6">(BuildContext context) {</span></div>
<div class="m" style="left:365.6px;top:183px;font-size:12px;color:#606366;">20</div>
<div class="m" style="left:456.0px;top:183px;"><span style="color:#a9b7c6">lockScreenPortrait()</span><span style="color:#c8915e">;</span></div>
<div class="m" style="left:365.6px;top:205px;font-size:12px;color:#606366;">21</div>
<div class="m" style="left:456.0px;top:205px;"><span style="color:#c8915e">return </span><span style="color:#e6c38e">StreamBuilder</span><span style="color:#a9b7c6">(</span></div>
<div class="m" style="left:365.6px;top:227px;font-size:12px;color:#606366;">22</div>
<div class="m" style="left:488.0px;top:227px;"><span style="color:#a9b7c6">stream: </span><span style="color:#e6c38e">Connectivity</span><span style="color:#a9b7c6">().</span><span style="color:#9aa0a6">onConnectivityChanged</span><span style="color:#c8915e">,</span></div>
<div class="m" style="left:365.6px;top:249px;font-size:12px;color:#606366;">23</div>
<div class="m" style="left:488.0px;top:249px;"><span style="color:#a9b7c6">builder: (context</span><span style="color:#c8915e">, </span><span style="color:#a9b7c6">AsyncSnapshot&lt;ConnectivityResult&gt; statusSnapshot) {</span></div>
<div class="m" style="left:365.6px;top:271px;font-size:12px;color:#606366;">24</div>
<div class="m" style="left:504.0px;top:271px;"><span style="color:#c8915e">return </span><span style="color:#e6c38e">GetMaterialApp</span><span style="color:#a9b7c6">(</span></div>
<div class="m" style="left:365.6px;top:293px;font-size:12px;color:#606366;">25</div>
<div class="m" style="left:536.0px;top:293px;"><span style="color:#a9b7c6">themeMode: </span><span style="color:#e6c38e">ThemeService</span><span style="color:#a9b7c6">().</span><span style="color:#9aa0a6">theme</span><span style="color:#c8915e">,</span></div>
<div class="m" style="left:365.6px;top:315px;font-size:12px;color:#606366;">26</div>
<div class="m" style="left:536.0px;top:315px;"><span style="color:#a9b7c6">theme: </span><span style="color:#e6c38e">AppTheme</span><span style="color:#a9b7c6">.</span><span style="color:#e6c38e">fromType</span><span style="color:#a9b7c6">(ThemeType.</span><span style="color:#9aa0a6">light</span><span style="color:#a9b7c6">).</span><span style="color:#9aa0a6">themeData</span><span style="color:#c8915e">,</span></div>
<div class="m" style="left:365.6px;top:337px;font-size:12px;color:#606366;">27</div>
<div class="m" style="left:536.0px;top:337px;"><span style="color:#a9b7c6">darkTheme: </span><span style="color:#e6c38e">AppTheme</span><span style="color:#a9b7c6">.</span><span style="color:#e6c38e">fromType</span><span style="color:#a9b7c6">(ThemeType.</span><span style="color:#9aa0a6">dark</span><span style="color:#a9b7c6">).</span><span style="color:#9aa0a6">themeData</span><span style="color:#c8915e">,</span></div>
<div class="m" style="left:365.6px;top:359px;font-size:12px;color:#606366;">28</div>
<div class="m" style="left:536.0px;top:359px;"><span style="color:#a9b7c6">locale: </span><span style="color:#c8915e">const </span><span style="color:#e6c38e">Locale</span><span style="color:#a9b7c6">(</span><span style="color:#808a7c">&#x27;en&#x27;</span><span style="color:#c8915e">, </span><span style="color:#808a7c">&#x27;US&#x27;</span><span style="color:#a9b7c6">)</span><span style="color:#c8915e">,</span></div>
<div class="m" style="left:365.6px;top:381px;font-size:12px;color:#606366;">29</div>
<div class="m" style="left:536.0px;top:381px;"><span style="color:#a9b7c6">translations: </span><span style="color:#e6c38e">Language</span><span style="color:#a9b7c6">()</span><span style="color:#c8915e">,</span></div>
<div class="m" style="left:365.6px;top:403px;font-size:12px;color:#606366;">30</div>
<div class="m" style="left:536.0px;top:403px;"><span style="color:#a9b7c6">fallbackLocale: </span><span style="color:#c8915e">const </span><span style="color:#e6c38e">Locale</span><span style="color:#a9b7c6">(</span><span style="color:#808a7c">&#x27;en&#x27;</span><span style="color:#c8915e">, </span><span style="color:#808a7c">&#x27;US&#x27;</span><span style="color:#a9b7c6">)</span><span style="color:#c8915e">,</span></div>
<div class="m" style="left:365.6px;top:425px;font-size:12px;color:#606366;">31</div>
<div class="m" style="left:536.0px;top:425px;"><span style="color:#a9b7c6">home: </span><span style="color:#e6c38e">Dashboard</span><span style="color:#a9b7c6">()</span><span style="color:#c8915e">,</span></div>
<div class="m" style="left:365.6px;top:447px;font-size:12px;color:#606366;">32</div>
<div class="m" style="left:536.0px;top:447px;"><span style="color:#a9b7c6">title: appFonts.</span><span style="color:#9aa0a6">goApp</span><span style="color:#c8915e">,</span></div>
<div class="m" style="left:365.6px;top:469px;font-size:12px;color:#606366;">33</div>
<div class="m" style="left:536.0px;top:469px;"><span style="color:#a9b7c6">getPages: appRoute.</span><span style="color:#9aa0a6">getPages</span><span style="color:#c8915e">,</span></div>
<div class="m" style="left:365.6px;top:491px;font-size:12px;color:#606366;">34</div>
<div class="m" style="left:536.0px;top:491px;"><span style="color:#a9b7c6">debugShowCheckedModeBanner: </span><span style="color:#c8915e">false</span><span style="color:#a9b7c6">)</span><span style="color:#c8915e">;</span><span style="color:#808080">  // GetMaterialApp</span></div>
<div class="m" style="left:365.6px;top:513px;font-size:12px;color:#606366;">35</div>
<div class="m" style="left:488.0px;top:513px;"><span style="color:#a9b7c6">})</span><span style="color:#c8915e">;</span><span style="color:#808080">  // StreamBuilder</span></div>
<div class="m" style="left:365.6px;top:535px;font-size:12px;color:#606366;">36</div>
<div class="m" style="left:440.0px;top:535px;"><span style="color:#a9b7c6">}</span></div>
<div class="m" style="left:365.6px;top:557px;font-size:12px;color:#a4a3a3;">37</div>
<div class="m" style="left:365.6px;top:579px;font-size:12px;color:#606366;">38</div>
<div class="m" style="left:440.0px;top:579px;"><span style="color:#e6c38e">lockScreenPortrait</span><span style="color:#a9b7c6">() {</span></div>
<div class="m" style="left:365.6px;top:601px;font-size:12px;color:#606366;">39</div>
<div class="m" style="left:456.0px;top:601px;"><span style="color:#a9b7c6">SystemChrome.</span><span style="color:#e6c38e;font-style:italic">setPreferredOrientations</span><span style="color:#a9b7c6">([</span></div>
<div class="m" style="left:365.6px;top:623px;font-size:12px;color:#606366;">40</div>
<div class="m" style="left:472.0px;top:623px;"><span style="color:#a9b7c6">DeviceOrientation.</span><span style="color:#9aa0a6">portraitUp</span><span style="color:#c8915e">,</span></div>
<div class="m" style="left:365.6px;top:645px;font-size:12px;color:#606366;">41</div>
<div class="m" style="left:472.0px;top:645px;"><span style="color:#a9b7c6">DeviceOrientation.</span><span style="color:#9aa0a6">portraitDown</span><span style="color:#c8915e">,</span></div>
<div class="m" style="left:365.6px;top:667px;font-size:12px;color:#606366;">42</div>
<div class="m" style="left:456.0px;top:667px;"><span style="color:#a9b7c6">])</span><span style="color:#c8915e">;</span></div>
<svg style="left:413px;top:121px;" width="11" height="13" viewBox="0 0 11 13"><path d="M1 0.5H9.5V7.5L5.25 11.8L1 7.5z" fill="#313335" stroke="#6e6e6e" stroke-width="1"/><path d="M3.3 4H7.3" stroke="#8a8a8a" stroke-width="1"/></svg>
<svg style="left:413px;top:165px;" width="11" height="13" viewBox="0 0 11 13"><path d="M1 0.5H9.5V7.5L5.25 11.8L1 7.5z" fill="#313335" stroke="#6e6e6e" stroke-width="1"/><path d="M3.3 4H7.3" stroke="#8a8a8a" stroke-width="1"/></svg>
<svg style="left:413px;top:209px;" width="11" height="13" viewBox="0 0 11 13"><path d="M1 0.5H9.5V7.5L5.25 11.8L1 7.5z" fill="#313335" stroke="#6e6e6e" stroke-width="1"/><path d="M3.3 4H7.3" stroke="#8a8a8a" stroke-width="1"/></svg>
<svg style="left:413px;top:253px;" width="11" height="13" viewBox="0 0 11 13"><path d="M1 0.5H9.5V7.5L5.25 11.8L1 7.5z" fill="#313335" stroke="#6e6e6e" stroke-width="1"/><path d="M3.3 4H7.3" stroke="#8a8a8a" stroke-width="1"/></svg>
<svg style="left:413px;top:275px;" width="11" height="13" viewBox="0 0 11 13"><path d="M1 0.5H9.5V7.5L5.25 11.8L1 7.5z" fill="#313335" stroke="#6e6e6e" stroke-width="1"/><path d="M3.3 4H7.3" stroke="#8a8a8a" stroke-width="1"/></svg>
<svg style="left:413px;top:583px;" width="11" height="13" viewBox="0 0 11 13"><path d="M1 0.5H9.5V7.5L5.25 11.8L1 7.5z" fill="#313335" stroke="#6e6e6e" stroke-width="1"/><path d="M3.3 4H7.3" stroke="#8a8a8a" stroke-width="1"/></svg>
<svg style="left:413px;top:605px;" width="11" height="13" viewBox="0 0 11 13"><path d="M1 0.5H9.5V7.5L5.25 11.8L1 7.5z" fill="#313335" stroke="#6e6e6e" stroke-width="1"/><path d="M3.3 4H7.3" stroke="#8a8a8a" stroke-width="1"/></svg>
<svg style="left:413px;top:75px;" width="11" height="13" viewBox="0 0 11 13"><path d="M1 12.5H9.5V5.5L5.25 1.2L1 5.5z" fill="#313335" stroke="#6e6e6e" stroke-width="1"/><path d="M3.3 8.5H7.3" stroke="#8a8a8a" stroke-width="1"/></svg>
<svg style="left:413px;top:493px;" width="11" height="13" viewBox="0 0 11 13"><path d="M1 12.5H9.5V5.5L5.25 1.2L1 5.5z" fill="#313335" stroke="#6e6e6e" stroke-width="1"/><path d="M3.3 8.5H7.3" stroke="#8a8a8a" stroke-width="1"/></svg>
<svg style="left:413px;top:515px;" width="11" height="13" viewBox="0 0 11 13"><path d="M1 12.5H9.5V5.5L5.25 1.2L1 5.5z" fill="#313335" stroke="#6e6e6e" stroke-width="1"/><path d="M3.3 8.5H7.3" stroke="#8a8a8a" stroke-width="1"/></svg>
<svg style="left:413px;top:537px;" width="11" height="13" viewBox="0 0 11 13"><path d="M1 12.5H9.5V5.5L5.25 1.2L1 5.5z" fill="#313335" stroke="#6e6e6e" stroke-width="1"/><path d="M3.3 8.5H7.3" stroke="#8a8a8a" stroke-width="1"/></svg>
<svg style="left:413px;top:669px;" width="11" height="13" viewBox="0 0 11 13"><path d="M1 12.5H9.5V5.5L5.25 1.2L1 5.5z" fill="#313335" stroke="#6e6e6e" stroke-width="1"/><path d="M3.3 8.5H7.3" stroke="#8a8a8a" stroke-width="1"/></svg>
<svg style="left:385px;top:53px;" width="15" height="15" viewBox="0 0 15 15"><circle cx="5.5" cy="6" r="4.8" fill="#3d8fd1"/><circle cx="5.5" cy="6" r="2" fill="none" stroke="#2b5f8a" stroke-width="1"/><path d="M11 14V2M8.5 5L11 1.5L13.5 5" fill="none" stroke="#c0905a" stroke-width="1.8"/></svg>
<svg style="left:385px;top:163px;" width="15" height="15" viewBox="0 0 15 15"><circle cx="5.5" cy="6" r="4.8" fill="#3d8fd1"/><circle cx="5.5" cy="6" r="2" fill="none" stroke="#2b5f8a" stroke-width="1"/><path d="M11 14V2M8.5 5L11 1.5L13.5 5" fill="none" stroke="#c0905a" stroke-width="1.8"/></svg>
<div style="left:532px;top:378px;width:217px;height:24px;border:2px solid #f20d0d;box-sizing:border-box;"></div>
<svg style="left:1815px;top:61px;" width="16" height="12" viewBox="0 0 16 12"><path d="M1 5L5 9L12 1" fill="none" stroke="#499c54" stroke-width="2"/><path d="M2 11L5 9L8 11L11 9L14 11" fill="none" stroke="#499c54" stroke-width="1"/></svg>
<div class="t" style="left:1831px;top:58.37px;font-size:14px;line-height:20px;color:#bbbbbb;transform:scaleX(0.7711);">1</div>
<svg style="left:1848px;top:63px;" width="10" height="6" viewBox="0 0 10 6"><path d="M1 5L5 1L9 5" fill="none" stroke="#afb1b3" stroke-width="1.4"/></svg>
<svg style="left:1868px;top:63px;" width="10" height="6" viewBox="0 0 10 6"><path d="M1 1L5 5L9 1" fill="none" stroke="#afb1b3" stroke-width="1.4"/></svg>
<div style="left:1877px;top:242px;width:8px;height:347px;background:#4a4b4c;"></div>
<div style="left:10px;top:687px;width:1876px;height:1px;background:#323232;"></div>
<div style="left:10px;top:688px;width:1876px;height:26px;background:#3c3f41;"></div>
<div style="left:0px;top:714px;width:1886px;height:6px;background:#2b2b2b;"></div>
<div class="t" style="left:16px;top:691.37px;font-size:14px;line-height:20px;color:#bbbbbb;transform:scaleX(1.1274);">Terminal:</div>
<div class="t" style="left:99px;top:691.37px;font-size:14px;line-height:20px;color:#bbbbbb;transform:scaleX(1.0761);">Local</div>
<svg style="left:142px;top:698px;" width="8" height="8" viewBox="0 0 8 8"><path d="M0.5 0.5L7.5 7.5M7.5 0.5L0.5 7.5" stroke="#6d7072" stroke-width="1.1"/></svg>
<div style="left:87px;top:712px;width:74px;height:3px;background:#7c7f81;border-radius:1.5px;"></div>
<svg style="left:170px;top:695px;" width="12" height="12" viewBox="0 0 12 12"><path d="M6 0.5V11.5M0.5 6H11.5" stroke="#afb1b3" stroke-width="1.8"/></svg>
<svg style="left:195px;top:697px;" width="12" height="8" viewBox="0 0 12 8"><path d="M1 1L6 6L11 1" fill="none" stroke="#afb1b3" stroke-width="1.6"/></svg>
<svg style="left:1840px;top:694px;" width="14" height="14" viewBox="0 0 14 14"><circle cx="7.0" cy="7.0" r="4.20" fill="#afb1b3"/><path d="M5.50 4.23L6.32 1.14L7.68 1.14L8.50 4.23L8.65 4.31L11.74 3.48L12.41 4.66L10.15 6.92L10.15 7.08L12.41 9.34L11.74 10.52L8.65 9.69L8.50 9.77L7.68 12.86L6.32 12.86L5.50 9.77L5.35 9.69L2.26 10.52L1.59 9.34L3.85 7.08L3.85 6.92L1.59 4.66L2.26 3.48L5.35 4.31z" fill="#afb1b3" stroke="#afb1b3" stroke-width="2" stroke-linejoin="round"/><circle cx="7.0" cy="7.0" r="2.2" fill="#3c3f41"/></svg>
<div style="left:1867px;top:700px;width:12px;height:2px;background:#afb1b3;"></div>
<div style="left:326px;top:715px;width:9px;height:8px;background:#2b2b2b;border:1.5px solid #c8c8c8;box-sizing:border-box;"></div>
<div class="t" style="left:-7px;top:78px;font-size:13px;line-height:14px;color:#c8c8c8;transform-origin:0 0;transform:rotate(-90deg) scaleX(1.236);">Project</div>
<div style="left:0px;top:85px;width:5px;height:7px;background:#afb1b3;"></div>
<div class="t" style="left:-7px;top:158px;font-size:13px;line-height:14px;color:#bbbbbb;transform-origin:0 0;transform:rotate(-90deg) scaleX(1.005);">Commit</div>
<svg style="left:0px;top:161px;" width="6" height="12" viewBox="0 0 6 12"><circle cx="0" cy="6" r="3" fill="none" stroke="#afb1b3" stroke-width="1.5"/><path d="M0 0V2.5M0 9.5V12" stroke="#afb1b3" stroke-width="1.5"/></svg>
<div class="t" style="left:-7px;top:760px;font-size:13px;line-height:14px;color:#bbbbbb;transform-origin:0 0;transform:rotate(-90deg) scaleX(1.175);">Structure</div>
<div class="t" style="left:-7px;top:276px;font-size:13px;line-height:14px;color:#bbbbbb;transform-origin:0 0;transform:rotate(-90deg) scaleX(0.960);">Pull Requests</div>
<svg style="left:0px;top:281px;" width="6" height="11" viewBox="0 0 6 11"><path d="M0 1H4V10M0 5H5" fill="none" stroke="#afb1b3" stroke-width="1.6"/></svg>
<svg style="left:1891px;top:39px;" width="14" height="14" viewBox="0 0 14 14"><rect x="0.8" y="0.8" width="8" height="11.5" rx="0.5" fill="none" stroke="#afb1b3" stroke-width="1.6"/><rect x="4.5" y="7" width="9.5" height="7" fill="#3c3f41"/><path d="M5.5 13.5A4 4.2 0 0 1 13.5 13.5z" fill="#afb1b3"/><path d="M6.5 8L7.5 9.5M12.5 8L11.5 9.5" stroke="#afb1b3" stroke-width="0.8"/></svg>
<div class="t" style="left:1903px;top:55px;font-size:13px;line-height:14px;color:#bbbbbb;transform-origin:0 0;transform:rotate(90deg) scaleX(0.972);">Device Manager</div>
<svg style="left:1890px;top:175px;" width="12" height="12" viewBox="0 0 12 12"><circle cx="6" cy="6" r="5" fill="none" stroke="#afb1b3" stroke-width="1.4"/><path d="M6 3V9M4 5H8" stroke="#afb1b3" stroke-width="1.2"/></svg>
<div class="t" style="left:1903px;top:190px;font-size:13px;line-height:14px;color:#bbbbbb;transform-origin:0 0;transform:rotate(90deg) scaleX(0.958);">App Links Assistant</div>
<svg style="left:1890px;top:323px;" width="12" height="12" viewBox="0 0 12 12"><path d="M6 1C3 1 2.5 4 2.5 6V9L1 10.5H11L9.5 9V6C9.5 4 9 1 6 1z" fill="#afb1b3"/><rect x="4.5" y="11" width="3" height="1.5" fill="#afb1b3"/></svg>
<div class="t" style="left:1903px;top:337px;font-size:13px;line-height:14px;color:#bbbbbb;transform-origin:0 0;transform:rotate(90deg) scaleX(1.045);">Notifications</div>
<svg style="left:1892px;top:434px;" width="11" height="14" viewBox="0 0 11 14"><svg width="11" height="14" viewBox="0 0 166 202" preserveAspectRatio="none"><path d="M37.7 128.9L9.8 101L100.7 10.1H156.5z" fill="#62bdf0"/><path d="M156.4 102.4H100.7L79.8 123.3L107.7 151.2z" fill="#62bdf0"/><path d="M79.8 179.1L100.7 200H156.4L107.7 151.2z" fill="#2a6aa3"/><path d="M79.8 123.3L107.7 151.2L79.8 179.1L51.9 151.2z" fill="#62bdf0"/></svg></svg>
<div class="t" style="left:1903px;top:451px;font-size:13px;line-height:14px;color:#bbbbbb;transform-origin:0 0;transform:rotate(90deg) scaleX(1.011);">Flutter Inspector</div>
<svg style="left:1892px;top:574px;" width="11" height="14" viewBox="0 0 11 14"><svg width="11" height="14" viewBox="0 0 166 202" preserveAspectRatio="none"><path d="M37.7 128.9L9.8 101L100.7 10.1H156.5z" fill="#62bdf0"/><path d="M156.4 102.4H100.7L79.8 123.3L107.7 151.2z" fill="#62bdf0"/><path d="M79.8 179.1L100.7 200H156.4L107.7 151.2z" fill="#2a6aa3"/><path d="M79.8 123.3L107.7 151.2L79.8 179.1L51.9 151.2z" fill="#62bdf0"/></svg></svg>
<div class="t" style="left:1903px;top:591px;font-size:13px;line-height:14px;color:#bbbbbb;transform-origin:0 0;transform:rotate(90deg) scaleX(1.010);">Flutter Performance</div>
<div style="left:1908px;top:27px;width:3px;height:693px;background:#313335;"></div>
<div style="left:1911px;top:27px;width:4px;height:36px;background:#313335;"></div>
<div style="left:1911px;top:63px;width:4px;height:657px;background:#5b5d5f;border-radius:2px 0 0 0;"></div>
</body></html>
